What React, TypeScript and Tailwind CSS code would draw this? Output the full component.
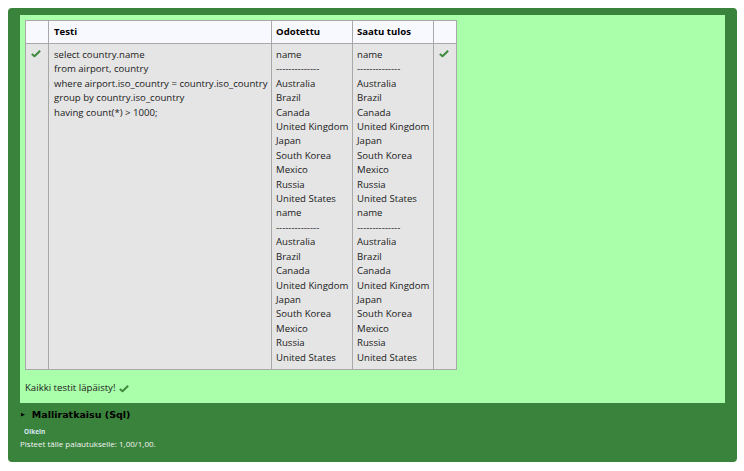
import React from 'react';

const countries = [
  'Australia',
  'Brazil',
  'Canada',
  'United Kingdom',
  'Japan',
  'South Korea',
  'Mexico',
  'Russia',
  'United States',
];

const output = [
  'name',
  '--------------',
  ...countries,
  'name',
  '--------------',
  ...countries,
];

const query = [
  'select country.name',
  'from airport, country',
  'where airport.iso_country = country.iso_country',
  'group by country.iso_country',
  'having count(*) > 1000;',
];

function Check({ className = '' }: { className?: string }) {
  return (
    <svg viewBox="0 0 12 10" className={`w-[10px] h-[9px] ${className}`}>
      <path d="M1 5.5 L4.2 8.3 L11 1.6" fill="none" stroke="#3f8a3c" strokeWidth="2.4" strokeLinejoin="round" />
    </svg>
  );
}

function Lines({ lines }: { lines: string[] }) {
  return (
    <div>
      {lines.map((l, i) => (
        <div key={i} className="whitespace-pre">
          {l}
        </div>
      ))}
    </div>
  );
}

export default function App() {
  return (
    <div
      className="w-[744px] h-[471px] bg-white pt-[8px] pl-[8px]"
      style={{ fontFamily: '"Open Sans", sans-serif' }}
    >
      <div className="w-[729px] h-[454px] bg-[#3a833c] rounded-[4px] pt-[7px] px-[12px]">
        <div className="bg-[#aaffaa] p-[5px] pb-[0px] h-[388px]">
          <table className="table-fixed w-[432px] border-collapse text-[9.6px] leading-[14.4px] text-[#1a1a1a]">
            <thead>
              <tr className="bg-[#f8f8ff] h-[23px] font-bold text-black">
                <th className="border border-[#a8a8a8] w-[23px]"></th>
                <th className="border border-[#a8a8a8] w-[223px] text-left px-[5px]">Testi</th>
                <th className="border border-[#a8a8a8] w-[81px] text-left px-[4px]">Odotettu</th>
                <th className="border border-[#a8a8a8] w-[81px] text-left px-[4px]">Saatu tulos</th>
                <th className="border border-[#a8a8a8] w-[23px]"></th>
              </tr>
            </thead>
            <tbody>
              <tr className="bg-[#e5e5e5] align-top">
                <td className="border border-[#a8a8a8] pt-[5px] pl-[5px]">
                  <Check />
                </td>
                <td className="border border-[#a8a8a8] px-[5px] pt-[4px]">
                  <Lines lines={query} />
                </td>
                <td className="border border-[#a8a8a8] px-[4px] pt-[4px] pb-[4px]">
                  <Lines lines={output} />
                </td>
                <td className="border border-[#a8a8a8] px-[4px] pt-[4px] pb-[4px]">
                  <Lines lines={output} />
                </td>
                <td className="border border-[#a8a8a8] pt-[5px] pl-[5px]">
                  <Check />
                </td>
              </tr>
            </tbody>
          </table>
          <div className="flex items-center gap-[4px] mt-[11px] text-[9.6px] text-[#1a1a1a]">
            <span>Kaikki testit läpäisty!</span>
            <Check />
          </div>
        </div>
        <div
          className="flex items-center mt-[5px] ml-[1px] text-[9.5px] font-bold text-black"
          style={{ fontFamily: '"DejaVu Sans", sans-serif' }}
        >
          <span className="text-[5px] mr-[7px]">▶</span>
          <span>Malliratkaisu (Sql)</span>
        </div>
        <div className="mt-[5px] ml-[4px] text-[6.5px] font-bold text-[#d8e8f0] leading-[10px]">Oikein</div>
        <div className="mt-[2px] text-[8px] text-[#f4f4f4] leading-[10px]">
          Pisteet tälle palautukselle: 1,00/1,00.
        </div>
      </div>
    </div>
  );
}
